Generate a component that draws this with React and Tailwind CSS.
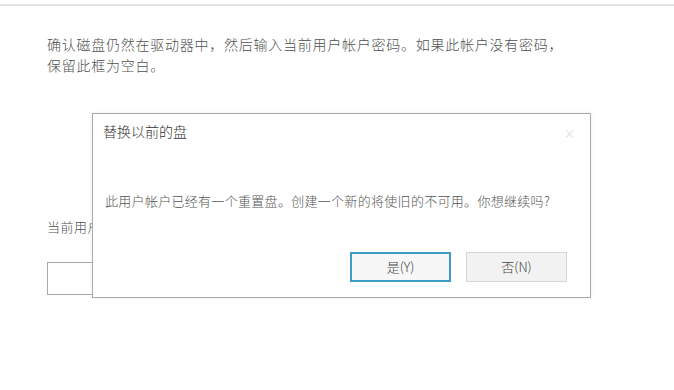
import React from 'react';

const font = { fontFamily: '"Noto Sans CJK SC", "Liberation Sans", sans-serif' };

export default function App() {
  return (
    <div className="relative w-[674px] h-[390px] bg-white overflow-hidden" style={font}>
      {/* top divider */}
      <div className="mt-[4px] h-[2px] bg-[#e4e4e4]" />

      {/* wizard page behind */}
      <div className="pl-[47px] pt-[28px]">
        <p className="text-[14px] leading-[21px] tracking-[0.75px] text-[#505050] font-light">
          确认磁盘仍然在驱动器中，然后输入当前用户帐户密码。如果此帐户没有密码，
          <br />
          保留此框为空白。
        </p>
        <p className="mt-[141px] text-[13px] leading-[20px] tracking-[0.5px] text-[#505050] font-light">
          当前用户帐户密码(P):
        </p>
        <div className="mt-[25px] w-[340px] h-[33px] border border-[#a8a8a8] bg-white" />
      </div>

      {/* modal dialog */}
      <div className="absolute left-[92px] top-[113px] w-[499px] h-[185px] bg-white border border-[#a9a9a9] shadow-[0_0_3px_rgba(0,0,0,0.08)] flex flex-col">
        <div className="flex items-start justify-between pl-[10px] pr-[14px] pt-[7px]">
          <span className="text-[14px] leading-[20px] text-[#333] font-light">替换以前的盘</span>
          <span className="text-[13px] leading-[20px] text-[#e2e2e2] mt-[2px]">×</span>
        </div>
        <p className="pl-[12px] mt-[48px] text-[13px] leading-[20px] tracking-[0.3px] text-[#555] font-light">
          此用户帐户已经有一个重置盘。创建一个新的将使旧的不可用。你想继续吗?
        </p>
        <div className="flex justify-end gap-[15px] pr-[23px] mt-[41px]">
          <button className="w-[101px] h-[30px] border-2 border-[#3d9cc3] bg-[#f7f7f7] text-[13px] text-[#444] font-light">
            是(Y)
          </button>
          <button className="w-[101px] h-[30px] border border-[#d6d6d6] bg-[#f2f2f2] text-[13px] text-[#444] font-light">
            否(N)
          </button>
        </div>
      </div>
    </div>
  );
}
